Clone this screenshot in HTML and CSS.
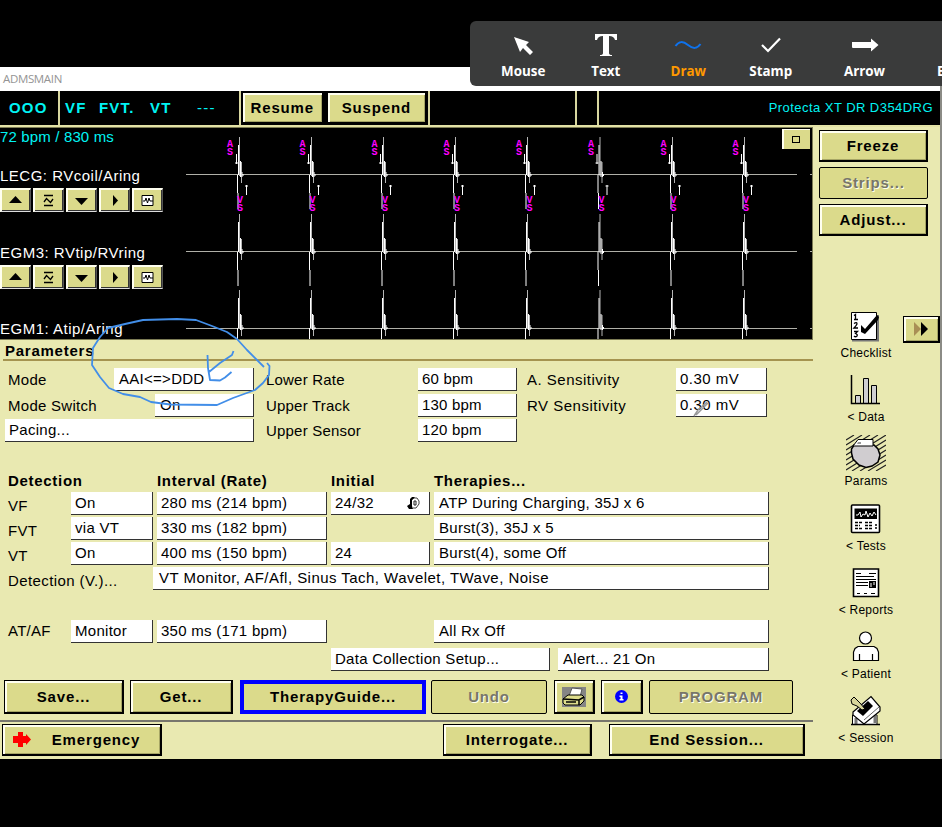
FILE: index.html
```
<!DOCTYPE html>
<html lang="en">
<head>
<meta charset="utf-8">
<title>ADMSMAIN</title>
<link rel="stylesheet" href="styles.css">
</head>
<body>
<svg class="defs" width="0" height="0" aria-hidden="true">
  <defs>
    <g id="beat">
      <path class="t-grey" d="M0 -38V1M2 -13V8"/>
      <path class="t-white" d="M-1 -30V0M-2 0V18M-1.500 18V34M1 -14V2M2.500 -3V2M3.500 -1V1"/>
    </g>
    <g id="marks">
      <path class="t-white" d="M-3 154V164M-4.500 163H-1.500M7 185V195M5.500 186H8.500"/>
    </g>
    <g id="i-up"><path d="M0 9L6.500 2L13 9z"/></g>
    <g id="i-down"><path d="M0 4H13L6.500 11z"/></g>
    <g id="i-right"><path d="M5 1L10 6.500L5 12z"/></g>
    <g id="i-gain" fill="none" stroke="#000"><path d="M2 1.500H11M2 11.500H11M2 8L4.500 4.500L8.500 8.500L11 5" stroke-width="1.300"/></g>
    <g id="i-strip"><path d="M1 1.500H12V11.500H1z" fill="#fff" stroke="#000"/><path d="M2 7H4L5 4L6.500 9L8 4L9 7H12" fill="none" stroke="#000"/></g>
  </defs>
</svg>

<div class="window">
  <header class="titlebar">ADMSMAIN</header>

  <div class="status">
    <div class="cell c-mode">OOO</div>
    <div class="cell c-zones"><span>VF</span><span>FVT.</span><span>VT</span><span class="dash">---</span></div>
    <div class="cell c-actions"><button class="btn resume">Resume</button><button class="btn suspend">Suspend</button></div>
    <div class="cell c-blank"></div>
    <div class="cell c-gap"></div>
    <div class="cell c-device">Protecta XT DR D354DRG</div>
  </div>

  <div class="body">
    <main class="main">
      <section class="egm">
        <svg class="traces" width="812" height="211" viewBox="0 128 812 211">
          <path class="t-base" d="M186 174.500H797M186 251.500H797M186 328.500H797M810 174.500H812M810 251.500H812M810 328.500H812"/>
          <g transform="translate(239.500 0)"><use href="#beat" y="175"/><use href="#beat" y="252"/><use href="#beat" y="328"/><use href="#marks"/></g>
          <g transform="translate(311.500 0)"><use href="#beat" y="175"/><use href="#beat" y="252"/><use href="#beat" y="328"/><use href="#marks"/></g>
          <g transform="translate(383.500 0)"><use href="#beat" y="175"/><use href="#beat" y="252"/><use href="#beat" y="328"/><use href="#marks"/></g>
          <g transform="translate(455.500 0)"><use href="#beat" y="175"/><use href="#beat" y="252"/><use href="#beat" y="328"/><use href="#marks"/></g>
          <g transform="translate(527.500 0)"><use href="#beat" y="175"/><use href="#beat" y="252"/><use href="#beat" y="328"/><use href="#marks"/></g>
          <g transform="translate(600 0)"><use href="#beat" y="175"/><use href="#beat" y="252"/><use href="#beat" y="328"/><use href="#marks"/></g>
          <g transform="translate(672.500 0)"><use href="#beat" y="175"/><use href="#beat" y="252"/><use href="#beat" y="328"/><use href="#marks"/></g>
          <g transform="translate(744.500 0)"><use href="#beat" y="175"/><use href="#beat" y="252"/><use href="#beat" y="328"/><use href="#marks"/></g>
          <g class="marker">
            <text x="230" y="146.500">A</text><text x="230" y="155">S</text><text x="240" y="202.500">V</text><text x="240" y="211">S</text>
            <text x="302.500" y="146.500">A</text><text x="302.500" y="155">S</text><text x="312.500" y="202.500">V</text><text x="312.500" y="211">S</text>
            <text x="374.500" y="146.500">A</text><text x="374.500" y="155">S</text><text x="385" y="202.500">V</text><text x="385" y="211">S</text>
            <text x="446.500" y="146.500">A</text><text x="446.500" y="155">S</text><text x="457" y="202.500">V</text><text x="457" y="211">S</text>
            <text x="519" y="146.500">A</text><text x="519" y="155">S</text><text x="529.500" y="202.500">V</text><text x="529.500" y="211">S</text>
            <text x="591" y="146.500">A</text><text x="591" y="155">S</text><text x="601.500" y="202.500">V</text><text x="601.500" y="211">S</text>
            <text x="663.500" y="146.500">A</text><text x="663.500" y="155">S</text><text x="673.500" y="202.500">V</text><text x="673.500" y="211">S</text>
            <text x="735.500" y="146.500">A</text><text x="735.500" y="155">S</text><text x="746" y="202.500">V</text><text x="746" y="211">S</text>
          </g>
        </svg>
        <div class="rate">72 bpm / 830 ms</div>
        <div class="lead">LECG: RVcoil/Aring</div>
        <div class="tools">
          <button class="tb"><svg width="13" height="13"><use href="#i-up"/></svg></button><button class="tb"><svg width="13" height="13"><use href="#i-gain"/></svg></button><button class="tb"><svg width="13" height="13"><use href="#i-down"/></svg></button><button class="tb"><svg width="13" height="13"><use href="#i-right"/></svg></button><button class="tb"><svg width="13" height="13"><use href="#i-strip"/></svg></button>
        </div>
        <div class="lead lead-2">EGM3: RVtip/RVring</div>
        <div class="tools">
          <button class="tb"><svg width="13" height="13"><use href="#i-up"/></svg></button><button class="tb"><svg width="13" height="13"><use href="#i-gain"/></svg></button><button class="tb"><svg width="13" height="13"><use href="#i-down"/></svg></button><button class="tb"><svg width="13" height="13"><use href="#i-right"/></svg></button><button class="tb"><svg width="13" height="13"><use href="#i-strip"/></svg></button>
        </div>
        <div class="lead lead-3">EGM1: Atip/Aring</div>
        <button class="expand"><i></i></button>
      </section>

      <h2 class="heading">Parameters</h2>

      <section class="params">
        <div class="col col-a">
          <div class="row"><span>Mode</span><b class="f w-mode">AAI&lt;=&gt;DDD</b></div>
          <div class="row"><span>Mode Switch</span><b class="f w-switch">On</b></div>
          <div class="row"><b class="f w-pacing">Pacing...</b></div>
        </div>
        <div class="col col-b">
          <div class="row"><span>Lower Rate</span><b class="f">60 bpm</b></div>
          <div class="row"><span>Upper Track</span><b class="f">130 bpm</b></div>
          <div class="row"><span>Upper Sensor</span><b class="f">120 bpm</b></div>
        </div>
        <div class="col col-c">
          <div class="row"><span>A. Sensitivity</span><b class="f">0.30 mV</b></div>
          <div class="row"><span>RV Sensitivity</span><b class="f">0.30 mV</b></div>
        </div>
      </section>

      <section class="detect">
        <h3>Detection</h3><h3 class="k3">Interval (Rate)</h3><h3 class="k4">Initial</h3><h3 class="k5">Therapies...</h3>
        <span class="k1">VF</span><b class="f k2">On</b><b class="f k3">280 ms (214 bpm)</b><b class="f k4 linked">24/32<svg width="14" height="14" viewBox="0 0 14 14"><path d="M4 11V4L7 2H10L12 5V8L9 12H6" fill="#fff" stroke="#444"/><path d="M5 1H8L5 4V10L6 13H2L0 10L3 8V3z"/><path d="M7 5V9H9V5z" fill="none" stroke="#222"/></svg></b><b class="f k5">ATP During Charging, 35J x 6</b>
        <span class="k1">FVT</span><b class="f k2">via VT</b><b class="f k3">330 ms (182 bpm)</b><b class="f k5">Burst(3), 35J x 5</b>
        <span class="k1">VT</span><b class="f k2">On</b><b class="f k3">400 ms (150 bpm)</b><b class="f k4">24</b><b class="f k5">Burst(4), some Off</b>
        <span class="k1 wide">Detection (V.)...</span><b class="f rest">VT Monitor, AF/Afl, Sinus Tach, Wavelet, TWave, Noise</b>
      </section>

      <section class="detect atrial">
        <span class="k1">AT/AF</span><b class="f k2">Monitor</b><b class="f k3">350 ms (171 bpm)</b><b class="f k5">All Rx Off</b>
      </section>
      <section class="setup"><b class="f data">Data Collection Setup...</b><b class="f alert">Alert... 21 On</b></section>

      <nav class="actions">
        <button class="btn save">Save...</button>
        <button class="btn get">Get...</button>
        <button class="btn guide">TherapyGuide...</button>
        <button class="btn off undo">Undo</button>
        <button class="btn print"><svg width="24" height="20" viewBox="0 0 24 20"><path d="M0 0H24V20H0z" fill="#858585"/><path d="M7 9L10 1L20 2L18 10z" fill="#fff" stroke="#555"/><path d="M1 12L6 8H20L22 10V14L18 18H3L1 16z" fill="#dddc8c" stroke="#000"/><path d="M1 12L17 13L22 10M17 13V18M4 15H14" fill="none" stroke="#000" stroke-width="1.500"/></svg></button>
        <button class="btn info"><svg width="13" height="13" viewBox="0 0 13 13"><circle cx="6.500" cy="6.500" r="6.500" fill="#00f"/><path d="M5.500 2.500H7.500V4H5.500zM4.500 5.500H7.500V9H8.500V10.500H4.500V9H5.500V7H4.500z" fill="#fff"/></svg></button>
        <button class="btn off program">PROGRAM</button>
      </nav>

      <footer class="footer">
        <button class="btn emergency"><svg width="18" height="15" viewBox="0 0 18 15"><path d="M5 0H10V4H13V2L18 7.500L13 13V11H10V15H5V11H0V4H5z" fill="#f00"/></svg>Emergency</button>
        <button class="btn interrogate">Interrogate...</button>
        <button class="btn end">End Session...</button>
      </footer>
    </main>

    <aside class="side">
      <button class="btn">Freeze</button>
      <button class="btn off">Strips...</button>
      <button class="btn">Adjust...</button>
      <div class="menu">
        <a class="item"><svg width="40" height="36" viewBox="0 0 40 36"><path d="M6 33.500H32V8" fill="none" stroke="#777" stroke-width="2"/><path d="M5.500 5.500H30.500V32.500H5.500z" fill="#fff" stroke="#000"/><path d="M8 8.500L9.500 7.500V12M8 12.500H12M8 16.500Q11 14.500 11 17Q10 19 8 21H12M8 24.500H11.500L9.500 26.500Q12 27.500 11 29Q9.500 30.500 8 29" fill="none" stroke="#000" stroke-width="1.300"/><path d="M15 18L19 22L31 8L33 10L32 13L19 27L15 25z"/></svg>Checklist</a>
        <a class="item"><svg width="40" height="36" viewBox="0 0 40 36"><g fill="#cfcfd2" stroke="#000"><path d="M9.500 32.500V24.500H14.500V32.500M17.500 32.500V7.500H22.500V32.500M25.500 32.500V14.500H30.500V32.500"/><path d="M5.500 4V32.500H34" fill="none" stroke-width="1.500"/></g></svg>&lt; Data</a>
        <a class="item"><svg width="40" height="36" viewBox="0 0 40 36"><path d="M0 5L8 0M0 10L16 0M0 15L24 0M0 20L32 0M0 25L40 0M0 30L40 5M0 35L40 10M6 36L40 15M14 36L40 20M22 36L40 25M30 36L40 30" stroke="#222" stroke-width="1.100"/><path d="M8 10H28L32 14L34 20L32 27L26 31L20 32.500L13 30L7 24L5.500 18V14z" fill="#d0cdd0" stroke="#000" stroke-width="1.500"/><path d="M7 11L12 4.500H27V11z" fill="#fff" stroke="#000"/><path d="M12 7H15V9H11z" fill="#999"/></svg>Params</a>
        <a class="item"><svg width="40" height="36" viewBox="0 0 40 36"><rect x="5.500" y="5" width="28" height="27.500" rx="1" fill="#fff" stroke="#000" stroke-width="1.600"/><path d="M8.500 8.500H31V19H8.500z"/><path d="M10 15H12L14 12L15 17L17 14L19 15L20 11L22 17L24 13L26 16L28 12L30 15" fill="none" stroke="#fff"/><path d="M9 22.500H16M9 25.500H14M9 28.500H16M19 22.500H26M19 25.500H26M19 28.500H26M29 25H31M29 28H31" stroke="#000" stroke-width="1.500" stroke-dasharray="3 1"/></svg>&lt; Tests</a>
        <a class="item"><svg width="40" height="36" viewBox="0 0 40 36"><path d="M7.500 5H32.500V32.500H7.500z" fill="#fff" stroke="#000" stroke-width="1.600"/><path d="M10 9.500H15M23 9.500H30M10 12.500H28M10 15.500H30M10 18.500H22M10 21.500H22M11 29.500H14M18 29.500H21M25 29.500H29" stroke="#000"/><path d="M23 17H30V24H23z"/><path d="M25 19V23M28 18V21" stroke="#fff"/></svg>&lt; Reports</a>
        <a class="item"><svg width="40" height="36" viewBox="0 0 40 36"><g fill="#fff" stroke="#000" stroke-width="1.200"><circle cx="19.500" cy="10" r="6"/><path d="M7.500 32.500V24L9 20.500L12 18.500H28L31 20.500L32.500 24V32.500zM13.500 32V26M26.500 32V26"/></g></svg>&lt; Patient</a>
        <a class="item"><svg width="40" height="36" viewBox="0 0 40 36"><path d="M6.500 32.500V23H31V32.500z" fill="#fff" stroke="#000"/><path d="M29 22V31M10 26V32" stroke="#777" stroke-width="3"/><path d="M5 32.500H34" stroke="#000" stroke-width="1.500"/><path d="M7 20L25 4.500L34 15V19L18 32L7 23z" fill="#fff" stroke="#000" stroke-width="1.200"/><path d="M11 19L22 9L27 14L17 24z"/><path d="M18 28L33 15" stroke="#666"/><path d="M5 8L8 5L14 11L19 17L16 18L11 14L6 12z" fill="#d8d69c" stroke="#000"/></svg>&lt; Session</a>
      </div>
      <button class="btn more"><svg width="14" height="14" viewBox="0 0 14 14"><path d="M0 0L7 7L0 14z" fill="#a98f55"/><path d="M7 0L14 7L7 14z"/></svg></button>
    </aside>
  </div>
</div>

<svg class="ink" width="942" height="827" viewBox="0 0 942 827">
  <path d="M264 367L247 350L237 339L227 332L212 326L196 320L177 319L143 320L125 324L108 328L100 337L93 348L92 365L100 377L109 388L123 394L140 397L151 402L170 404.500L217 405L233 398L255 390L263 383L269 375L269.500 366L267 363M207.500 355L208 368L210 380L220 380.500L225 377.500L231.500 372M233.500 351L232 355L220 363L209 372"/>
  <path class="pencil" d="M694 416L698 410L707 402M696 415L700 411L708 403"/>
</svg>

<div class="toolbar">
  <div class="tool"><svg width="28" height="28" viewBox="0 0 28 28"><path d="M5 6L20 11L17 14L24 21L21 24L14 17L11 21z" fill="#fff"/></svg>Mouse</div>
  <div class="tool"><svg width="28" height="28" viewBox="0 0 28 28"><path d="M3 3H25V9H23Q22 5 17 5V22Q17 24 20 24V25H8V24Q11 24 11 22V5Q6 5 5 9H3z" fill="#fff"/></svg>Text</div>
  <div class="tool on"><svg width="28" height="28" viewBox="0 0 28 28"><path d="M1.500 15C5 10 9 10 14 14S23 18 26.500 13" fill="none" stroke="#0e72ed" stroke-width="2"/></svg>Draw</div>
  <div class="tool"><svg width="28" height="28" viewBox="0 0 28 28"><path d="M5 14L11 20L23 7.500" fill="none" stroke="#fff" stroke-width="2.200"/></svg>Stamp</div>
  <div class="tool"><svg width="28" height="28" viewBox="0 0 28 28"><path d="M1 11H20V7.500L27.500 14L20 20.500V17H2Q1 17 1 16z" fill="#fff"/></svg>Arrow</div>
  <div class="tool cut">E</div>
</div>
</body>
</html>
```

FILE: styles.css
```
* { box-sizing: border-box; }
body {
  margin: 0; width: 942px; height: 827px; padding-top: 67px;
  position: relative; overflow: hidden; background: #000;
  font: 15px/22px "Liberation Sans", Arial, sans-serif; letter-spacing: .28px; color: #000;
}
.defs { position: absolute; }
.window { width: 942px; height: 692px; border-right: 2px solid #8b8b86; }
.titlebar { height: 24px; padding: 0 3px; background: #fff; color: #949494; font: 11.500px/24px "Open Sans", sans-serif; letter-spacing: -.35px; }

.status { display: flex; height: 36px; background: #000; border-bottom: 2px solid #e3e2a6; color: #00f4f4; }
.cell { border-right: 2px solid #d8d7a0; line-height: 33px; white-space: nowrap; }
.c-mode { width: 60px; padding-left: 9px; font-weight: bold; letter-spacing: 1.200px; }
.c-zones { width: 181px; padding-left: 5px; display: flex; font-weight: bold; letter-spacing: 1.200px; }
.c-zones span:nth-child(1) { width: 34px; }
.c-zones span:nth-child(2) { width: 51px; }
.c-zones span:nth-child(3) { width: 47px; }
.c-zones .dash { font-weight: normal; }
.c-actions { width: 189px; padding: 1px 1px 3px; display: flex; gap: 3px; }
.c-blank { width: 147px; }
.c-gap { width: 22px; }
.c-device { flex: 1; border: 0; padding-right: 7px; text-align: right; font-size: 13px; letter-spacing: .45px; }

.btn {
  display: flex; align-items: center; justify-content: center; padding: 0;
  border: solid #000; border-width: 1px 2px 2px 1px; background: #dbda8b;
  box-shadow: inset 2px 2px #fffff0, inset -1px -1px #a6a565;
  font: bold 15px/20px "Liberation Sans", Arial, sans-serif; letter-spacing: .85px; color: #000; white-space: nowrap;
}
.btn.off { border-width: 1px; border-radius: 2px; box-shadow: none; color: #77766a; text-shadow: 1px 1px #fffff0; }
.resume { width: 82px; height: 32px; }
.suspend { width: 101px; height: 32px; }

.body { display: flex; height: 632px; background: #e9e9b1; }
.main { width: 813px; }
.egm { position: relative; height: 213px; border: solid #7d7c55; border-width: 1px 1px 1px 0; background: #000; color: #fff; }
.traces { position: absolute; left: 0; top: 0; }
.t-white, .t-grey, .t-base { fill: none; stroke: #fff; }
.t-grey { stroke: #b5b5b5; }
.t-base { stroke: #b0b0a8; }
.marker { font: bold 10px "Liberation Mono", monospace; letter-spacing: 0; fill: #f0f; text-anchor: middle; }
.rate { height: 38px; line-height: 18px; letter-spacing: .15px; color: #00f4f4; }
.lead { height: 22px; line-height: 20px; letter-spacing: .5px; position: relative; }
.lead-2 { margin-top: 26px; padding-top: 5px; height: 27px; }
.lead-3 { padding-top: 4px; margin-top: 26px; height: 24px; }
.tools { display: flex; gap: 2px; height: 24px; }
.tb { width: 31px; height: 24px; padding: 0 2px 0 0; display: flex; align-items: center; justify-content: center; background: #dbda8b; border: solid; border-width: 2px 1px 1px 2px; border-color: #fffff0 #555 #ddd #fffff0; box-shadow: inset -1px -1px #333; }
.expand { position: absolute; left: 782px; top: 1px; width: 28px; height: 20px; padding: 0; background: #dbda8b; border: 0; box-shadow: inset 2px 1px #fffff0; display: flex; align-items: center; justify-content: center; }
.expand i { width: 8px; height: 7px; border: 1px solid #000; }

.heading { margin: 0 0 0 3px; padding-left: 2px; height: 21px; border-bottom: 2px solid #a59450; font: bold 15px/22px "Liberation Sans", sans-serif; letter-spacing: .75px; }
.params { display: flex; height: 111px; padding: 7px 0 0 5px; }
.col { display: flex; flex-direction: column; gap: 2px; }
.row { display: flex; justify-content: space-between; height: 23.500px; }
.row span { padding-left: 3px; white-space: nowrap; line-height: 23px; }
.f { display: block; font-weight: normal; height: 23px; line-height: 22px; padding-left: 4px; background: #fff; border: solid #333; border-width: 0 1px 1px 0; white-space: nowrap; }
.col-a { width: 249px; margin-right: 9px; }
.col-b { width: 254px; margin-right: 7px; letter-spacing: .2px; }
.col-b .f { width: 99px; }
.col-c { width: 243px; letter-spacing: .5px; }
.col-c .f { width: 91px; }
.w-mode { width: 140px; padding-left: 5px; }
.w-switch { width: 99px; padding-left: 5px; }
.w-pacing { width: 249px; }

.detect { display: grid; grid-template-columns: 66px 82px 4px 170px 4px 99px 4px 335px; grid-template-rows: 18px repeat(4, 23px); row-gap: 2px; padding-left: 5px; height: 148px; }
.detect h3 { margin: 0 0 0 3px; grid-column: 1 / 3; font: bold 15px/18px "Liberation Sans", sans-serif; letter-spacing: .7px; white-space: nowrap; }
.detect .k1 { grid-column: 1; padding: 3px 0 0 3px; white-space: nowrap; }
.detect .k2 { grid-column: 2; }
.detect .k3 { grid-column: 4; }
.detect .k4 { grid-column: 6; }
.detect .k5 { grid-column: 8; padding-left: 5px; }
.detect h3.k3, .detect h3.k4, .detect h3.k5 { margin-left: 0; padding: 0; }
.detect .wide { grid-column: 1 / 3; grid-row: 5; letter-spacing: .4px; }
.detect .rest { grid-column: 2 / 9; grid-row: 5; margin-left: 82px; padding-left: 6px; letter-spacing: .46px; }
.linked { display: flex; justify-content: space-between; align-items: center; padding-right: 8px; }
.atrial { grid-template-rows: 23px; height: 28px; }
.atrial .k1 { padding-top: 0; }
.setup { display: flex; gap: 8px; height: 32px; padding-left: 331px; }
.data { width: 219px; }
.alert { width: 211px; padding-left: 5px; }

.actions { display: flex; height: 42px; padding-left: 4px; border-bottom: 2px solid #77766d; }
.actions .btn { height: 34px; }
.save { width: 120px; margin-right: 6px; }
.get { width: 103px; margin-right: 7px; }
.actions .guide { width: 186px; margin-right: 5px; border: 4px solid #00f; box-shadow: none; padding: 0; }
.undo { width: 116px; margin-right: 7px; }
.print { width: 41px; margin-right: 6px; }
.info { width: 42px; margin-right: 6px; }
.program { width: 144px; }
.footer { display: flex; padding: 2px 0 0 2px; }
.footer .btn { height: 32px; }
.footer .emergency { width: 160px; margin-right: 281px; gap: 21px; padding-right: 10px; }
.interrogate { width: 149px; margin-right: 17px; }
.end { width: 196px; }

.side { position: relative; flex: 1; padding: 3px 0 0 6px; }
.side > .btn { width: 109px; height: 32px; margin-bottom: 5px; }
.menu { margin-top: 71px; width: 94px; display: flex; flex-direction: column; }
.item { display: flex; flex-direction: column; align-items: center; height: 64.200px; font-size: 12px; line-height: 16px; letter-spacing: .25px; }
.item svg { margin-bottom: 2px; }
.side > .more { position: absolute; left: 90px; top: 189px; width: 37px; height: 27px; margin: 0; }

.ink { position: absolute; left: 0; top: 0; fill: none; stroke: #428ee8; stroke-width: 1.800; stroke-linejoin: round; }
.ink .pencil { stroke: #999; stroke-width: 1.500; }

.toolbar { position: absolute; left: 470px; top: 21px; width: 472px; height: 65px; border-radius: 6px 0 0 6px; overflow: hidden; background: #3a3b3b; color: #fff; display: flex; padding: 10px 0 0 12px; font: bold 13.400px/18px "Open Sans", sans-serif; letter-spacing: 0; }
.tool { width: 82.500px; flex: none; display: flex; flex-direction: column; align-items: center; gap: 3px; }
.tool:nth-child(5) { width: 105px; }
.tool.on { color: #f90; }
.tool.cut { padding: 31px 0 0 20px; align-items: flex-start; }
```
